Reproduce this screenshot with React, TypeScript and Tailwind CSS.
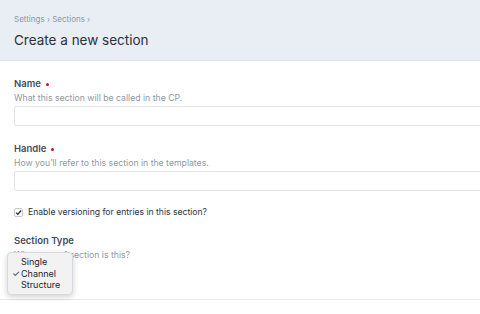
const Field = ({ label, hint }: { label: string; hint: string }) => (
  <div>
    <p className="flex items-center gap-[5px] text-[9.5px] font-semibold leading-[14px] text-[#3f4d5a]">
      {label}
      <span className="h-[3px] w-[3px] rounded-full bg-[#cf1124]"></span>
    </p>
    <p className="text-[8.7px] leading-[14px] text-[#8f98a3]">{hint}</p>
    <div className="mt-[1px] h-[20px] w-[500px] rounded-[2px] border border-[#e3e5e8] bg-white"></div>
  </div>
);

export default function App() {
  return (
    <div className="h-[314px] w-[480px] overflow-hidden bg-white font-['Inter',sans-serif]">
      <div className="h-[61px] border-b border-[#dfe3ea] bg-[#e9edf4] px-[14px] pt-[13px]">
        <p className="text-[8px] leading-[12px] text-[#8f98a3]">Settings › Sections ›</p>
        <h1 className="mt-[5px] text-[13.5px] leading-[20px] text-[#29323d]">Create a new section</h1>
      </div>
      <div className="relative border-b border-[#e8eaec] px-[14px] pb-[7px] pt-[16px]">
        <Field label="Name" hint="What this section will be called in the CP." />
        <div className="mt-[16px]">
          <Field label="Handle" hint="How you’ll refer to this section in the templates." />
        </div>
        <label className="mt-[14px] flex items-center gap-[5px] text-[8.6px] leading-[14px] text-[#29323d]">
          <span className="flex h-[9px] w-[9px] items-center justify-center rounded-[2px] border border-[#c4c9d0] bg-white">
            <svg viewBox="0 0 10 10" className="h-[9px] w-[9px]">
              <path d="M1.5 5.2 L4 7.6 L8.8 2.2" fill="none" stroke="#1c2630" strokeWidth="1.8" />
            </svg>
          </span>
          Enable versioning for entries in this section?
        </label>
        <div className="mt-[15px]">
          <p className="text-[9.5px] font-semibold leading-[14px] text-[#3f4d5a]">Section Type</p>
          <p className="text-[8.7px] leading-[14px] text-[#8f98a3]">What type of section is this?</p>
          <div className="h-[30px]"></div>
        </div>
        <div className="absolute left-[7px] top-[191px] w-[66px] rounded-[4px] border border-[#d6d9dd] bg-[#f2f2f3] py-[3px] text-[9px] leading-[11.5px] text-[#1c2630] shadow-[0_2px_6px_rgba(0,0,0,0.18)]">
          <p className="pl-[13px]">Single</p>
          <p className="relative pl-[13px]">
            <span className="absolute left-[4px]">✓</span>
            Channel
          </p>
          <p className="pl-[13px]">Structure</p>
        </div>
      </div>
    </div>
  );
}
